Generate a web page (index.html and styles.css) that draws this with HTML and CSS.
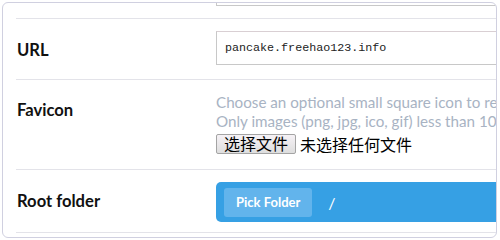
FILE: index.html
```html
<!DOCTYPE html>
<html>
<head>
<meta charset="utf-8">
<link rel="stylesheet" href="styles.css">
</head>
<body>
<div class="card">
  <div class="inner">
    <div class="row row-top">
      <div></div>
      <div class="stub"></div>
    </div>
    <div class="row row-url">
      <div class="label">URL</div>
      <div class="field"><input class="text-input" type="text" value="pancake.freehao123.info"></div>
    </div>
    <div class="row row-favicon">
      <div class="label label-top">Favicon</div>
      <div class="field">
        <div class="help">Choose an optional small square icon to represent your site.</div>
        <div class="help">Only images (png, jpg, ico, gif) less than 100KB are allowed.</div>
        <div class="file">
          <span class="file-btn">选择文件</span>
          <span class="file-none">未选择任何文件</span>
        </div>
      </div>
    </div>
    <div class="row row-root">
      <div class="label">Root folder</div>
      <div class="field">
        <div class="picker">
          <span class="pick-btn">Pick Folder</span>
          <span class="path">/</span>
        </div>
      </div>
    </div>
  </div>
</div>
</body>
</html>
```

FILE: styles.css
```css
* { box-sizing: border-box; }
html, body { margin: 0; padding: 0; background: #fff; }
body { font-family: Lato, "Noto Sans", sans-serif; }

.card {
  margin: 2px 0 0 2px;
  width: 495px;
  height: 236px;
  border: 1px solid #d0d0e0;
  border-radius: 6px;
  overflow: hidden;
  background: #fff;
}
.inner {
  padding-left: 13px;
  width: 800px;
}
.row {
  display: grid;
  grid-template-columns: 200px 1fr;
  align-items: center;
  border-bottom: 1px solid #e3e3e9;
}
.row-top { height: 16px; align-items: start; }
.stub {
  height: 3px;
  width: 340px;
  border: 1px solid #c8c8c8;
  border-top: none;
}
.row-url { padding: 12px 0 14px; }
.row-favicon { padding: 13px 0 15px; align-items: start; }
.row-root { padding: 12px 0 10px; }

.label {
  font-size: 16.6px;
  font-weight: 700;
  color: #111;
  padding-left: 1px;
  line-height: 20px;
}
.row-url .label { margin-top: 3px; }
.row-root .label { margin-top: -3px; }
.label-top { margin-top: 7px; }

.text-input {
  display: block;
  width: 340px;
  height: 34px;
  border: 1px solid #c8c8c8;
  border-top-color: #d9cfd3;
  padding: 0 8px;
  font-family: "Liberation Mono", monospace;
  font-size: 11.7px;
  color: #222;
  background: #fff;
  outline: none;
}

.help {
  font-size: 15.2px;
  line-height: 19px;
  color: #a8b3c3;
  white-space: nowrap;
}
.file {
  display: flex;
  align-items: center;
  gap: 4px;
  margin-top: 3px;
  font-family: "Noto Sans CJK SC", sans-serif;
  font-size: 16px;
  line-height: 18px;
  color: #000;
}
.file-btn {
  display: inline-block;
  width: 80px;
  height: 20px;
  text-align: center;
  border: 1px solid #a4a4a4;
  border-radius: 2px;
  background: linear-gradient(#f6f2f6, #dedede);
  line-height: 17px;
}
.file-none { white-space: nowrap; }

.picker {
  display: flex;
  align-items: center;
  gap: 16px;
  height: 40px;
  padding: 1px 8px 0;
  background: #36a0e4;
  border-radius: 5px 0 0 5px;
}
.pick-btn {
  display: inline-block;
  height: 29px;
  line-height: 29px;
  padding: 0 12px;
  border-radius: 3px;
  background: #62b4ec;
  color: #fff;
  font-size: 13px;
  font-weight: 700;
}
.path {
  color: #fff;
  font-size: 16px;
}
```
